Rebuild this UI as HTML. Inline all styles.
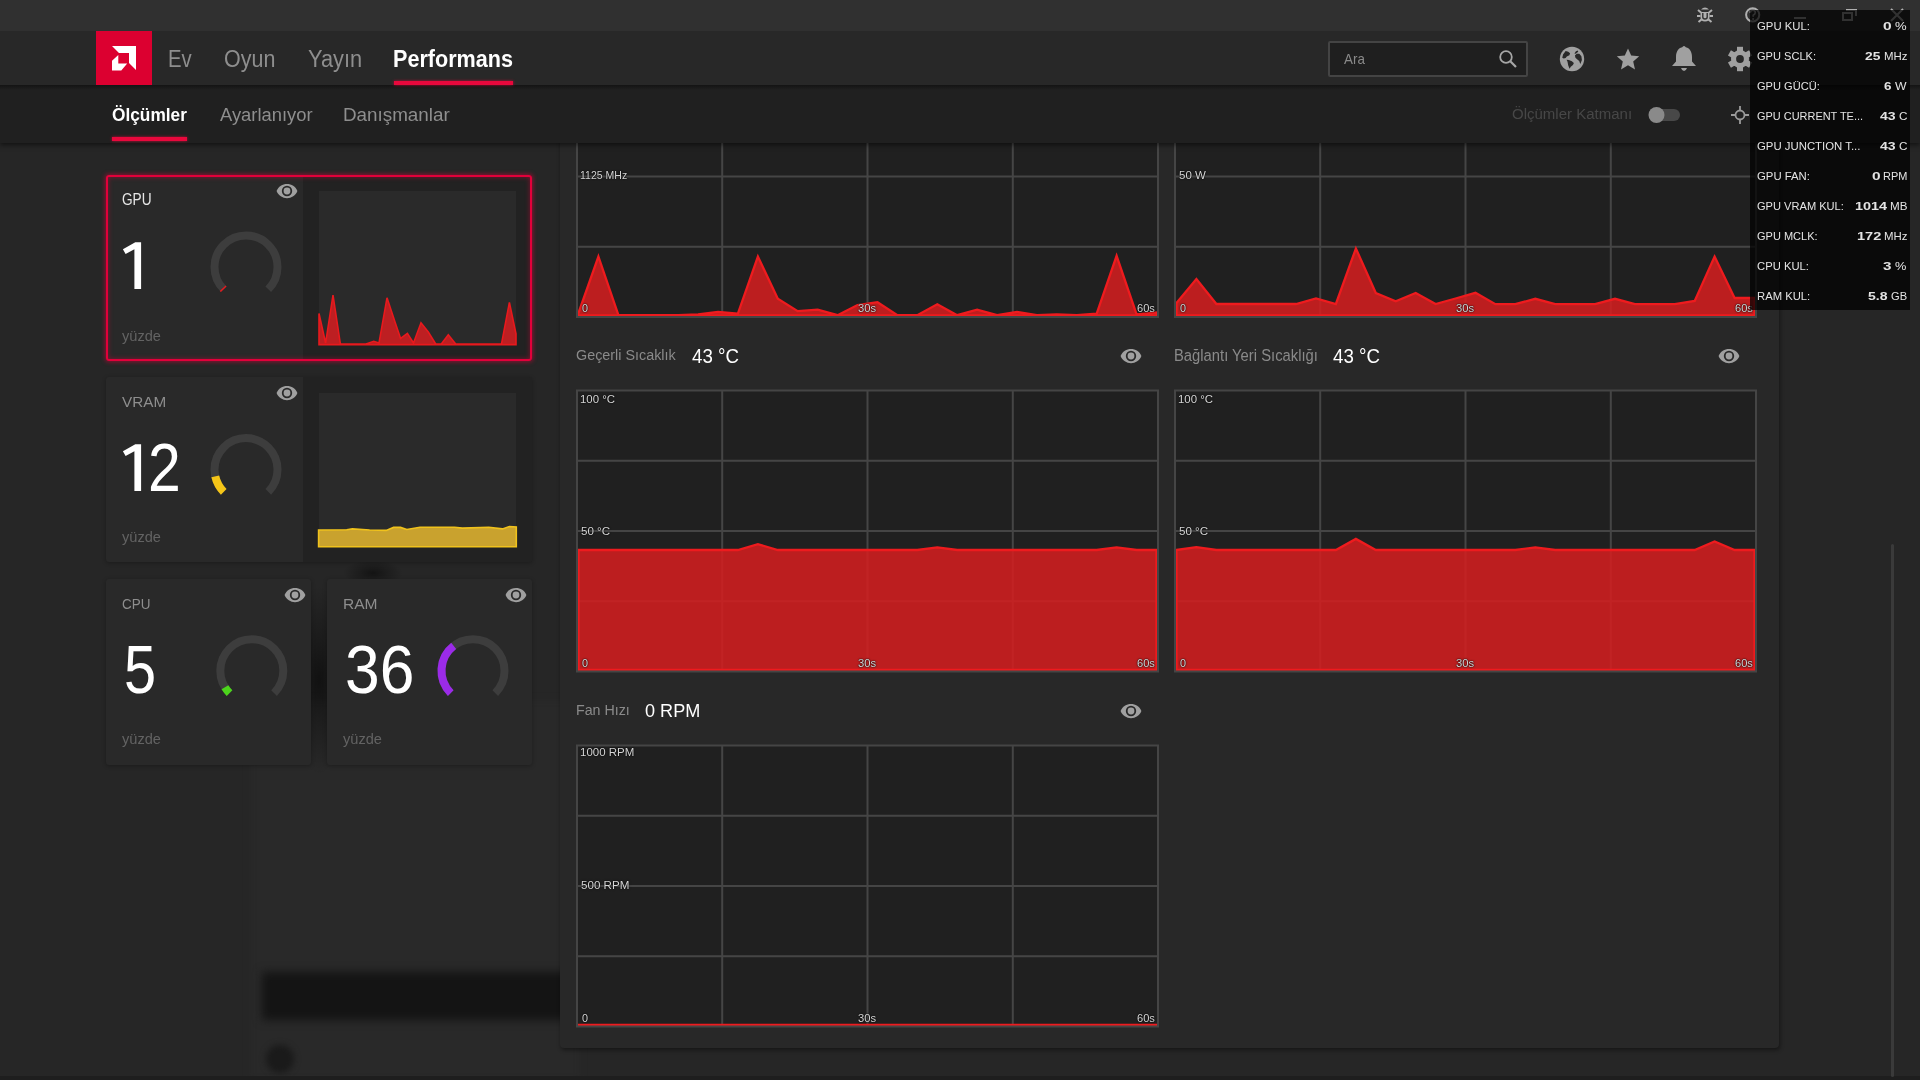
<!DOCTYPE html>
<html><head><meta charset="utf-8"><style>
*{margin:0;padding:0;box-sizing:border-box}
html,body{width:1920px;height:1080px;overflow:hidden;background:#262626;font-family:"Liberation Sans", sans-serif;}
.a{position:absolute;white-space:nowrap;line-height:1}
.t{transform-origin:0 0;z-index:6}
.ov{font-size:12px;color:#e2e2e2;z-index:21}
svg{position:absolute;left:0;top:0}
</style></head><body>

<!-- blurred background shapes -->
<div class="a" style="left:250px;top:700px;width:330px;height:380px;background:#292929;filter:blur(3px)"></div>
<div class="a" style="left:262px;top:972px;width:320px;height:48px;background:#141414;filter:blur(5px)"></div>
<div class="a" style="left:266px;top:1045px;width:28px;height:28px;border-radius:50%;background:#1a1a1a;filter:blur(3px)"></div>
<div class="a" style="left:289px;top:585px;width:60px;height:190px;background:radial-gradient(ellipse 50% 50% at 50% 50%, rgba(0,0,0,0.55) 0%, rgba(0,0,0,0.3) 40%, rgba(0,0,0,0) 100%)"></div>
<div class="a" style="left:343px;top:560px;width:60px;height:26px;background:radial-gradient(ellipse 50% 50% at 50% 50%, rgba(0,0,0,0.5) 0%, rgba(0,0,0,0.25) 45%, rgba(0,0,0,0) 100%)"></div>
<div class="a" style="left:0;top:1076px;width:1920px;height:4px;background:#1e1e1e"></div>
<!-- main panel -->
<div class="a" style="left:560px;top:120px;width:1219px;height:928px;background:#282828;border-radius:0 0 4px 4px;box-shadow:1px 2px 4px rgba(0,0,0,0.45)"></div>

<svg width="1920" height="1080" viewBox="0 0 1920 1080" style="z-index:1">
<rect x="577" y="36" width="581" height="281" fill="#202020"/>
<path d="M577,106.2 H1158 M577,176.5 H1158 M577,246.8 H1158 M722.2,36 V317 M867.5,36 V317 M1012.8,36 V317" stroke="#454545" stroke-width="2" fill="none"/>
<path d="M578.5,315.5 L578.5,313.0 L598.4,256.6 L618.4,315.2 L638.3,315.2 L658.2,315.2 L678.2,315.2 L698.1,314.4 L718.0,312.0 L737.9,313.6 L757.9,256.6 L777.8,298.8 L797.7,311.2 L817.7,309.7 L837.6,315.2 L857.5,305.0 L877.5,302.2 L897.4,315.2 L917.3,315.2 L937.3,304.2 L957.2,315.2 L977.1,309.7 L997.1,315.2 L1017.0,312.0 L1036.9,315.2 L1056.8,314.4 L1076.8,315.2 L1096.7,313.6 L1116.6,255.8 L1136.6,314.4 L1156.5,312.5 L1156.5,315.5 Z" fill="rgba(214,30,32,0.86)"/>
<path d="M578.5,313.0 L598.4,256.6 L618.4,315.2 L638.3,315.2 L658.2,315.2 L678.2,315.2 L698.1,314.4 L718.0,312.0 L737.9,313.6 L757.9,256.6 L777.8,298.8 L797.7,311.2 L817.7,309.7 L837.6,315.2 L857.5,305.0 L877.5,302.2 L897.4,315.2 L917.3,315.2 L937.3,304.2 L957.2,315.2 L977.1,309.7 L997.1,315.2 L1017.0,312.0 L1036.9,315.2 L1056.8,314.4 L1076.8,315.2 L1096.7,313.6 L1116.6,255.8 L1136.6,314.4 L1156.5,312.5 L1156.5,315.5 L578.5,315.5 Z" fill="none" stroke="#ee1b1e" stroke-width="2.3" stroke-linejoin="miter"/>
<rect x="577" y="36" width="581" height="281" fill="none" stroke="#454545" stroke-width="2"/>
<rect x="1175" y="36" width="581" height="281" fill="#202020"/>
<path d="M1175,106.2 H1756 M1175,176.5 H1756 M1175,246.8 H1756 M1320.2,36 V317 M1465.5,36 V317 M1610.8,36 V317" stroke="#454545" stroke-width="2" fill="none"/>
<path d="M1176.5,315.5 L1176.5,303.1 L1196.4,279.0 L1216.4,304.0 L1236.3,304.0 L1256.2,304.0 L1276.2,304.0 L1296.1,304.0 L1316.0,298.5 L1335.9,304.0 L1355.9,248.5 L1375.8,293.0 L1395.7,301.3 L1415.7,293.0 L1435.6,304.0 L1455.5,298.5 L1475.5,292.8 L1495.4,304.2 L1515.3,304.2 L1535.3,298.8 L1555.2,304.2 L1575.1,304.2 L1595.1,304.2 L1615.0,298.8 L1634.9,304.2 L1654.8,304.2 L1674.8,304.2 L1694.7,301.0 L1714.6,256.6 L1734.6,298.0 L1754.5,298.0 L1754.5,315.5 Z" fill="rgba(214,30,32,0.86)"/>
<path d="M1176.5,303.1 L1196.4,279.0 L1216.4,304.0 L1236.3,304.0 L1256.2,304.0 L1276.2,304.0 L1296.1,304.0 L1316.0,298.5 L1335.9,304.0 L1355.9,248.5 L1375.8,293.0 L1395.7,301.3 L1415.7,293.0 L1435.6,304.0 L1455.5,298.5 L1475.5,292.8 L1495.4,304.2 L1515.3,304.2 L1535.3,298.8 L1555.2,304.2 L1575.1,304.2 L1595.1,304.2 L1615.0,298.8 L1634.9,304.2 L1654.8,304.2 L1674.8,304.2 L1694.7,301.0 L1714.6,256.6 L1734.6,298.0 L1754.5,298.0 L1754.5,315.5 L1176.5,315.5 Z" fill="none" stroke="#ee1b1e" stroke-width="2.3" stroke-linejoin="miter"/>
<rect x="1175" y="36" width="581" height="281" fill="none" stroke="#454545" stroke-width="2"/>
<rect x="577" y="390.5" width="581" height="281" fill="#202020"/>
<path d="M577,460.8 H1158 M577,531.0 H1158 M577,601.2 H1158 M722.2,390.5 V671.5 M867.5,390.5 V671.5 M1012.8,390.5 V671.5" stroke="#454545" stroke-width="2" fill="none"/>
<path d="M578.5,670.0 L578.5,550.0 L598.4,550.0 L618.4,550.0 L638.3,550.0 L658.2,550.0 L678.2,550.0 L698.1,550.0 L718.0,550.0 L737.9,550.0 L757.9,544.2 L777.8,550.0 L797.7,550.0 L817.7,550.0 L837.6,550.0 L857.5,550.0 L877.5,550.0 L897.4,550.0 L917.3,550.0 L937.3,547.3 L957.2,550.0 L977.1,550.0 L997.1,550.0 L1017.0,550.0 L1036.9,550.0 L1056.8,550.0 L1076.8,550.0 L1096.7,550.0 L1116.6,547.3 L1136.6,550.0 L1156.5,550.0 L1156.5,670.0 Z" fill="rgba(214,30,32,0.86)"/>
<path d="M578.5,550.0 L598.4,550.0 L618.4,550.0 L638.3,550.0 L658.2,550.0 L678.2,550.0 L698.1,550.0 L718.0,550.0 L737.9,550.0 L757.9,544.2 L777.8,550.0 L797.7,550.0 L817.7,550.0 L837.6,550.0 L857.5,550.0 L877.5,550.0 L897.4,550.0 L917.3,550.0 L937.3,547.3 L957.2,550.0 L977.1,550.0 L997.1,550.0 L1017.0,550.0 L1036.9,550.0 L1056.8,550.0 L1076.8,550.0 L1096.7,550.0 L1116.6,547.3 L1136.6,550.0 L1156.5,550.0 L1156.5,670.0 L578.5,670.0 Z" fill="none" stroke="#ee1b1e" stroke-width="2.3" stroke-linejoin="miter"/>
<rect x="577" y="390.5" width="581" height="281" fill="none" stroke="#454545" stroke-width="2"/>
<rect x="1175" y="390.5" width="581" height="281" fill="#202020"/>
<path d="M1175,460.8 H1756 M1175,531.0 H1756 M1175,601.2 H1756 M1320.2,390.5 V671.5 M1465.5,390.5 V671.5 M1610.8,390.5 V671.5" stroke="#454545" stroke-width="2" fill="none"/>
<path d="M1176.5,670.0 L1176.5,550.0 L1196.4,547.1 L1216.4,550.0 L1236.3,550.0 L1256.2,550.0 L1276.2,550.0 L1296.1,550.0 L1316.0,550.0 L1335.9,550.0 L1355.9,538.9 L1375.8,550.0 L1395.7,550.0 L1415.7,550.0 L1435.6,550.0 L1455.5,550.0 L1475.5,550.0 L1495.4,550.0 L1515.3,550.0 L1535.3,547.3 L1555.2,550.0 L1575.1,550.0 L1595.1,550.0 L1615.0,550.0 L1634.9,550.0 L1654.8,550.0 L1674.8,550.0 L1694.7,550.0 L1714.6,541.4 L1734.6,550.0 L1754.5,550.0 L1754.5,670.0 Z" fill="rgba(214,30,32,0.86)"/>
<path d="M1176.5,550.0 L1196.4,547.1 L1216.4,550.0 L1236.3,550.0 L1256.2,550.0 L1276.2,550.0 L1296.1,550.0 L1316.0,550.0 L1335.9,550.0 L1355.9,538.9 L1375.8,550.0 L1395.7,550.0 L1415.7,550.0 L1435.6,550.0 L1455.5,550.0 L1475.5,550.0 L1495.4,550.0 L1515.3,550.0 L1535.3,547.3 L1555.2,550.0 L1575.1,550.0 L1595.1,550.0 L1615.0,550.0 L1634.9,550.0 L1654.8,550.0 L1674.8,550.0 L1694.7,550.0 L1714.6,541.4 L1734.6,550.0 L1754.5,550.0 L1754.5,670.0 L1176.5,670.0 Z" fill="none" stroke="#ee1b1e" stroke-width="2.3" stroke-linejoin="miter"/>
<rect x="1175" y="390.5" width="581" height="281" fill="none" stroke="#454545" stroke-width="2"/>
<rect x="577" y="745.5" width="581" height="281" fill="#202020"/>
<path d="M577,815.8 H1158 M577,886.0 H1158 M577,956.2 H1158 M722.2,745.5 V1026.5 M867.5,745.5 V1026.5 M1012.8,745.5 V1026.5" stroke="#454545" stroke-width="2" fill="none"/>
<path d="M578.5,1025.0 L578.5,1025.5 L598.4,1025.5 L618.4,1025.5 L638.3,1025.5 L658.2,1025.5 L678.2,1025.5 L698.1,1025.5 L718.0,1025.5 L737.9,1025.5 L757.9,1025.5 L777.8,1025.5 L797.7,1025.5 L817.7,1025.5 L837.6,1025.5 L857.5,1025.5 L877.5,1025.5 L897.4,1025.5 L917.3,1025.5 L937.3,1025.5 L957.2,1025.5 L977.1,1025.5 L997.1,1025.5 L1017.0,1025.5 L1036.9,1025.5 L1056.8,1025.5 L1076.8,1025.5 L1096.7,1025.5 L1116.6,1025.5 L1136.6,1025.5 L1156.5,1025.5 L1156.5,1025.0 Z" fill="rgba(214,30,32,0.86)"/>
<path d="M578.5,1025.5 L598.4,1025.5 L618.4,1025.5 L638.3,1025.5 L658.2,1025.5 L678.2,1025.5 L698.1,1025.5 L718.0,1025.5 L737.9,1025.5 L757.9,1025.5 L777.8,1025.5 L797.7,1025.5 L817.7,1025.5 L837.6,1025.5 L857.5,1025.5 L877.5,1025.5 L897.4,1025.5 L917.3,1025.5 L937.3,1025.5 L957.2,1025.5 L977.1,1025.5 L997.1,1025.5 L1017.0,1025.5 L1036.9,1025.5 L1056.8,1025.5 L1076.8,1025.5 L1096.7,1025.5 L1116.6,1025.5 L1136.6,1025.5 L1156.5,1025.5 L1156.5,1025.0 L578.5,1025.0 Z" fill="none" stroke="#ee1b1e" stroke-width="2.3" stroke-linejoin="miter"/>
<rect x="577" y="745.5" width="581" height="281" fill="none" stroke="#454545" stroke-width="2"/>
</svg>

<div class="a" style="left:0;top:85px;width:1920px;height:58px;background:#202020;z-index:2;box-shadow:0 2px 5px rgba(0,0,0,0.55)"></div>
<div class="a" style="left:0;top:31px;width:1920px;height:54px;background:#282828;z-index:3"></div>
<div class="a" style="left:0;top:0;width:1920px;height:31px;background:#303030;z-index:3"></div>
<div class="a" style="left:0;top:85px;width:1920px;height:5px;background:linear-gradient(rgba(0,0,0,0.38),rgba(0,0,0,0));z-index:5"></div>
<!-- underlines -->
<div class="a" style="z-index:5;left:394px;top:81px;width:119px;height:4px;background:#e8083c;box-shadow:0 0 3px rgba(232,8,60,0.8)"></div>
<div class="a" style="z-index:5;left:112px;top:137px;width:75px;height:4px;background:#e8083c;box-shadow:0 0 3px rgba(232,8,60,0.8)"></div>
<!-- search box -->
<div class="a" style="left:1328px;top:41px;width:200px;height:36px;background:#1f1f1f;border:2px solid #444;border-radius:2px;z-index:4"></div>

<!-- cards -->
<div class="a" style="left:106px;top:175px;width:426px;height:186px;background:#292929;border-radius:3px;z-index:1"></div>
<div class="a" style="left:303px;top:175px;width:229px;height:186px;background:#222;z-index:1"></div>
<div class="a" style="left:319px;top:191px;width:197px;height:154px;background:#2a2a2a;z-index:1"></div>
<div class="a" style="left:106px;top:175px;width:426px;height:186px;border:2px solid #e2003a;border-radius:3px;box-shadow:0 0 4px 1px rgba(226,0,58,0.55), inset 0 0 5px rgba(226,0,58,0.5);z-index:1"></div>

<div class="a" style="left:106px;top:377px;width:426px;height:185px;background:#292929;border-radius:3px;z-index:1;box-shadow:0 1px 4px rgba(0,0,0,0.3)"></div>
<div class="a" style="left:303px;top:377px;width:229px;height:185px;background:#222;border-radius:0 3px 3px 0;z-index:1"></div>
<div class="a" style="left:319px;top:393px;width:197px;height:154px;background:#2a2a2a;z-index:1"></div>

<div class="a" style="left:106px;top:579px;width:205px;height:186px;background:#292929;border-radius:3px;z-index:1;box-shadow:0 1px 4px rgba(0,0,0,0.3)"></div>
<div class="a" style="left:327px;top:579px;width:205px;height:186px;background:#292929;border-radius:3px;z-index:1;box-shadow:0 1px 4px rgba(0,0,0,0.3)"></div>

<svg width="1920" height="1080" viewBox="0 0 1920 1080" style="z-index:5">
<path d="M319.0,344.6 L319.0,313.5 L325.6,343.0 L333.0,295.0 L340.4,344.0 L366.0,344.0 L373.7,341.3 L379.0,343.0 L387.0,297.8 L395.0,321.9 L400.6,338.5 L407.4,333.3 L413.5,343.0 L421.0,322.8 L428.3,332.0 L435.7,344.0 L441.3,344.0 L448.3,334.8 L455.7,344.0 L501.5,344.0 L509.4,302.4 L516.0,333.9 L516.0,344.6 Z" fill="#bd1f22"/><path d="M319.0,313.5 L325.6,343.0 L333.0,295.0 L340.4,344.0 L366.0,344.0 L373.7,341.3 L379.0,343.0 L387.0,297.8 L395.0,321.9 L400.6,338.5 L407.4,333.3 L413.5,343.0 L421.0,322.8 L428.3,332.0 L435.7,344.0 L441.3,344.0 L448.3,334.8 L455.7,344.0 L501.5,344.0 L509.4,302.4 L516.0,333.9 L516,344.6 L319,344.6 Z" fill="none" stroke="#e8191d" stroke-width="1.6"/>
<path d="M318.6,546.7 L318.6,530.0 L346.7,529.7 L352.4,528.9 L369.6,530.0 L386.2,530.4 L393.6,527.4 L400.5,527.4 L406.8,529.5 L420.0,527.2 L454.4,527.2 L462.4,528.1 L488.8,527.2 L502.5,528.9 L509.4,526.6 L516.3,527.0 L516.3,546.7 Z" fill="#c9a22e"/><path d="M318.6,530.0 L346.7,529.7 L352.4,528.9 L369.6,530.0 L386.2,530.4 L393.6,527.4 L400.5,527.4 L406.8,529.5 L420.0,527.2 L454.4,527.2 L462.4,528.1 L488.8,527.2 L502.5,528.9 L509.4,526.6 L516.3,527.0 L516.3,546.7 L318.6,546.7 Z" fill="none" stroke="#f0c21c" stroke-width="1.6"/>
<path d="M223.73,289.27 A31.5,31.5 0 1 1 268.27,289.27" stroke="#3d3d3d" stroke-width="8" fill="none"/><path d="M223.73,289.27 A31.5,31.5 0 0 1 222.70,288.20" stroke="#e8191d" stroke-width="8" fill="none"/>
<path d="M223.73,491.87 A31.5,31.5 0 1 1 268.27,491.87" stroke="#3d3d3d" stroke-width="8" fill="none"/><path d="M223.73,491.87 A31.5,31.5 0 0 1 215.26,476.47" stroke="#f5c518" stroke-width="8" fill="none"/>
<path d="M229.53,693.07 A31.5,31.5 0 1 1 274.07,693.07" stroke="#3d3d3d" stroke-width="8" fill="none"/><path d="M229.53,693.07 A31.5,31.5 0 0 1 224.94,687.26" stroke="#4cd41c" stroke-width="8" fill="none"/>
<path d="M450.73,693.07 A31.5,31.5 0 1 1 495.27,693.07" stroke="#3d3d3d" stroke-width="8" fill="none"/><path d="M450.73,693.07 A31.5,31.5 0 0 1 453.69,645.91" stroke="#9b2be8" stroke-width="8" fill="none"/>
<path d="M276.6,191 C280,181.5 294,181.5 297.4,191 C294,200.5 280,200.5 276.6,191 Z" fill="#a0a0a0"/><circle cx="287" cy="191" r="5.2" fill="#292929"/><circle cx="287" cy="191" r="3.4" fill="#a0a0a0"/>
<path d="M276.6,393 C280,383.5 294,383.5 297.4,393 C294,402.5 280,402.5 276.6,393 Z" fill="#a0a0a0"/><circle cx="287" cy="393" r="5.2" fill="#292929"/><circle cx="287" cy="393" r="3.4" fill="#a0a0a0"/>
<path d="M284.6,595 C288,585.5 302,585.5 305.4,595 C302,604.5 288,604.5 284.6,595 Z" fill="#a0a0a0"/><circle cx="295" cy="595" r="5.2" fill="#292929"/><circle cx="295" cy="595" r="3.4" fill="#a0a0a0"/>
<path d="M505.6,595 C509,585.5 523,585.5 526.4,595 C523,604.5 509,604.5 505.6,595 Z" fill="#a0a0a0"/><circle cx="516" cy="595" r="5.2" fill="#292929"/><circle cx="516" cy="595" r="3.4" fill="#a0a0a0"/>
<path d="M1120.6,356 C1124,346.5 1138,346.5 1141.4,356 C1138,365.5 1124,365.5 1120.6,356 Z" fill="#a0a0a0"/><circle cx="1131" cy="356" r="5.2" fill="#282828"/><circle cx="1131" cy="356" r="3.4" fill="#a0a0a0"/>
<path d="M1718.6,356 C1722,346.5 1736,346.5 1739.4,356 C1736,365.5 1722,365.5 1718.6,356 Z" fill="#a0a0a0"/><circle cx="1729" cy="356" r="5.2" fill="#282828"/><circle cx="1729" cy="356" r="3.4" fill="#a0a0a0"/>
<path d="M1120.6,711 C1124,701.5 1138,701.5 1141.4,711 C1138,720.5 1124,720.5 1120.6,711 Z" fill="#a0a0a0"/><circle cx="1131" cy="711" r="5.2" fill="#282828"/><circle cx="1131" cy="711" r="3.4" fill="#a0a0a0"/>
<path d="M134.4,288.9 H141.1 V242.2 H135.3 L122.9,249.3 L125.6,254 L134.4,249.3 Z" fill="#fff"/>
<path d="M134.4,490.9 H141.1 V444.2 H135.3 L122.9,451.3 L125.6,456 L134.4,451.3 Z" fill="#fff"/>
<!-- AMD logo -->
<rect x="96" y="31" width="56" height="54" fill="#dc0030"/>
<path d="M112,46 H136 V70 L129,63 V53 H119 Z" fill="#fff"/>
<path d="M118.3,54.9 V63.4 H127.2 L121.3,70.4 H112 V60.8 Z" fill="#fff"/>
<!-- search icon -->
<circle cx="1506" cy="57" r="5.8" fill="none" stroke="#a6a6a6" stroke-width="1.8"/>
<path d="M1510.3,61.3 L1516,67" stroke="#a6a6a6" stroke-width="2.2"/>
<!-- globe -->
<circle cx="1572" cy="59" r="12.2" fill="#a0a0a0"/>
<g transform="translate(1571.9,59) scale(0.05208) translate(-420,-365)" fill="#282828">
<path d="M235,340 L250,280 L300,212 L350,228 L385,255 L372,292 L322,318 L300,345 L262,356 Z"/>
<path d="M318,378 L362,384 L420,410 L458,440 L440,482 L398,512 L375,552 L350,492 L336,420 Z"/>
<path d="M468,258 L498,214 L532,204 L542,226 L492,266 Z"/>
<path d="M478,300 L512,262 L562,262 L602,310 L612,382 L582,462 L560,402 L520,372 L488,342 Z"/>
</g>
<!-- star -->
<path d="M1628,48.6 L1631.2,55.6 L1639.2,56.3 L1633.2,61.5 L1635,69.6 L1628,65.3 L1621,69.6 L1622.8,61.5 L1616.8,56.3 L1624.8,55.6 Z" fill="#a0a0a0"/>
<!-- bell -->
<path d="M1684,47 C1689,47 1692,51 1692,57 V61.5 L1696,66 H1672 L1676,61.5 V57 C1676,51 1679,47 1684,47 Z" fill="#a0a0a0"/>
<path d="M1681,68 H1687 Q1686,71 1684,71 Q1682,71 1681,68 Z" fill="#a0a0a0"/><circle cx="1684" cy="47.6" r="1.6" fill="#a0a0a0"/>
<!-- gear -->
<g transform="translate(1740,59)" fill="#a0a0a0">
<circle r="9"/>
<rect x="-3" y="-12.2" width="6" height="24.4"/>
<rect x="-3" y="-12.2" width="6" height="24.4" transform="rotate(60)"/>
<rect x="-3" y="-12.2" width="6" height="24.4" transform="rotate(120)"/>
<circle r="3.9" fill="#282828"/>
</g>
<!-- toggle -->
<rect x="1649" y="109" width="31" height="12" rx="6" fill="#484848"/>
<circle cx="1656.5" cy="115" r="8" fill="#8a8a8a"/>
<!-- crosshair -->
<g stroke="#9a9a9a" stroke-width="1.8" fill="none">
<circle cx="1740" cy="115" r="4.5"/>
<path d="M1731,115 H1735.5 M1744.5,115 H1749 M1740,106 V110.5 M1740,119.5 V124"/>
</g>
<!-- title icons -->
<g fill="none" stroke="#b0b0b0" stroke-width="2">
<circle cx="1752.7" cy="14.8" r="6.6"/>
</g>
<path d="M1750.3,12.8 Q1750.3,10.3 1752.8,10.3 Q1755.3,10.3 1755.3,12.6 Q1755.3,14.2 1753.2,15.2 V16.8" stroke="#b0b0b0" stroke-width="1.6" fill="none"/>
<circle cx="1753.1" cy="18.9" r="1" fill="#b0b0b0"/>
<g fill="#b0b0b0">
<path d="M1701,9.5 Q1705,5.5 1709,9.5 Z"/>
<path d="M1700.5,12 H1709.5 V17 Q1709.5,21.5 1705,21.5 Q1700.5,21.5 1700.5,17 Z"/>
</g>
<path d="M1702.8,13 V17 Q1702.8,19 1705,19 Q1707.2,19 1707.2,17 V13" stroke="#303030" stroke-width="1.4" fill="none"/>
<g stroke="#b0b0b0" stroke-width="2">
<path d="M1697,16 H1700.5 M1709.5,16 H1713 M1698,10 L1701,12.5 M1712,10 L1709,12.5 M1698.5,22 L1701.5,19.5 M1711.5,22 L1708.5,19.5"/>
</g>
<g stroke="#b0b0b0" stroke-width="2" fill="none">
<path d="M1794,18 H1806"/>
<rect x="1843" y="13" width="9" height="7"/>
<path d="M1846,10 H1856 V16"/>
<path d="M1891,9 L1903,21 M1903,9 L1891,21"/>
</g>
</svg>

<div class="a t" style="left:167.97px;top:47.642px;font-size:23.48px;color:#8e8e8e;font-weight:normal;transform:scaleX(0.8659);">Ev</div>
<div class="a t" style="left:224.44px;top:47.642px;font-size:23.48px;color:#8e8e8e;font-weight:normal;transform:scaleX(0.9153);">Oyun</div>
<div class="a t" style="left:307.76px;top:47.642px;font-size:23.48px;color:#8e8e8e;font-weight:normal;transform:scaleX(0.9290);">Yayın</div>
<div class="a t" style="left:393.20px;top:47.742px;font-size:23.48px;color:#ffffff;font-weight:bold;transform:scaleX(0.9202);">Performans</div>
<div class="a t" style="left:111.81px;top:106.672px;font-size:17.68px;color:#ffffff;font-weight:bold;transform:scaleX(0.9779);">Ölçümler</div>
<div class="a t" style="left:219.80px;top:106.672px;font-size:17.68px;color:#8e8e8e;font-weight:normal;transform:scaleX(1.0397);">Ayarlanıyor</div>
<div class="a t" style="left:343.49px;top:106.672px;font-size:17.68px;color:#8e8e8e;font-weight:normal;transform:scaleX(1.0651);">Danışmanlar</div>
<div class="a t" style="left:1344.00px;top:51.537px;font-size:14.78px;color:#8a8a8a;font-weight:normal;transform:scaleX(0.9065);">Ara</div>
<div class="a t" style="left:1512.10px;top:105.604px;font-size:15.29px;color:#474747;font-weight:normal;transform:scaleX(0.9817);">Ölçümler Katmanı</div>
<div class="a t" style="left:122.02px;top:191.701px;font-size:15.94px;color:#e6e6e6;font-weight:normal;transform:scaleX(0.8560);">GPU</div>
<div class="a t" style="left:121.90px;top:328.688px;font-size:14.72px;color:#636363;font-weight:normal;transform:scaleX(0.9910);">yüzde</div>
<div class="a t" style="left:122.40px;top:394.560px;font-size:14.93px;color:#8e8e8e;font-weight:normal;transform:scaleX(1.0227);">VRAM</div>
<div class="a t" style="left:147.55px;top:432.598px;font-size:68.12px;color:#ffffff;font-weight:normal;transform:scaleX(0.8648);">2</div>
<div class="a t" style="left:121.90px;top:529.688px;font-size:14.72px;color:#636363;font-weight:normal;transform:scaleX(0.9910);">yüzde</div>
<div class="a t" style="left:122.03px;top:595.690px;font-size:15.07px;color:#8e8e8e;font-weight:normal;transform:scaleX(0.8940);">CPU</div>
<div class="a t" style="left:123.79px;top:634.598px;font-size:68.12px;color:#ffffff;font-weight:normal;transform:scaleX(0.8472);">5</div>
<div class="a t" style="left:121.90px;top:731.688px;font-size:14.72px;color:#636363;font-weight:normal;transform:scaleX(0.9910);">yüzde</div>
<div class="a t" style="left:342.66px;top:595.694px;font-size:15.36px;color:#8e8e8e;font-weight:normal;transform:scaleX(1.0131);">RAM</div>
<div class="a t" style="left:344.63px;top:634.598px;font-size:68.12px;color:#ffffff;font-weight:normal;transform:scaleX(0.9149);">36</div>
<div class="a t" style="left:343.10px;top:731.688px;font-size:14.72px;color:#636363;font-weight:normal;transform:scaleX(0.9910);">yüzde</div>
<div class="a t" style="left:576.03px;top:347.710px;font-size:14.93px;color:#8a8a8a;font-weight:normal;transform:scaleX(0.9616);">Geçerli Sıcaklık</div>
<div class="a t" style="left:691.93px;top:346.739px;font-size:19.66px;color:#ffffff;font-weight:normal;transform:scaleX(0.9511);">43 °C</div>
<div class="a t" style="left:1173.72px;top:347.680px;font-size:16.67px;color:#8a8a8a;font-weight:normal;transform:scaleX(0.8880);">Bağlantı Yeri Sıcaklığı</div>
<div class="a t" style="left:1332.93px;top:346.739px;font-size:19.66px;color:#ffffff;font-weight:normal;transform:scaleX(0.9511);">43 °C</div>
<div class="a t" style="left:575.86px;top:701.544px;font-size:15.36px;color:#8a8a8a;font-weight:normal;transform:scaleX(0.9267);">Fan Hızı</div>
<div class="a t" style="left:645.46px;top:700.690px;font-size:19.13px;color:#ffffff;font-weight:normal;transform:scaleX(0.9470);">0 RPM</div>
<div class="a t" style="left:580.46px;top:169.574px;font-size:11.09px;color:#d6d6d6;font-weight:normal;transform:scaleX(0.9495);text-shadow:0 0 2px #000,0 0 1px #000">1125 MHz</div>
<div class="a t" style="left:581.68px;top:302.667px;font-size:11.45px;color:#d6d6d6;font-weight:normal;transform:scaleX(0.9447);text-shadow:0 0 2px #000,0 0 1px #000">0</div>
<div class="a t" style="left:858.46px;top:302.667px;font-size:11.45px;color:#d6d6d6;font-weight:normal;transform:scaleX(0.9790);text-shadow:0 0 2px #000,0 0 1px #000">30s</div>
<div class="a t" style="left:1136.55px;top:302.667px;font-size:11.45px;color:#d6d6d6;font-weight:normal;transform:scaleX(0.9689);text-shadow:0 0 2px #000,0 0 1px #000">60s</div>
<div class="a t" style="left:1178.74px;top:169.574px;font-size:11.09px;color:#d6d6d6;font-weight:normal;transform:scaleX(1.0349);text-shadow:0 0 2px #000,0 0 1px #000">50 W</div>
<div class="a t" style="left:1179.68px;top:302.667px;font-size:11.45px;color:#d6d6d6;font-weight:normal;transform:scaleX(0.9447);text-shadow:0 0 2px #000,0 0 1px #000">0</div>
<div class="a t" style="left:1456.46px;top:302.667px;font-size:11.45px;color:#d6d6d6;font-weight:normal;transform:scaleX(0.9790);text-shadow:0 0 2px #000,0 0 1px #000">30s</div>
<div class="a t" style="left:1734.55px;top:302.667px;font-size:11.45px;color:#d6d6d6;font-weight:normal;transform:scaleX(0.9689);text-shadow:0 0 2px #000,0 0 1px #000">60s</div>
<div class="a t" style="left:580.40px;top:393.667px;font-size:11.45px;color:#d6d6d6;font-weight:normal;transform:scaleX(0.9981);text-shadow:0 0 2px #000,0 0 1px #000">100 °C</div>
<div class="a t" style="left:581.04px;top:524.738px;font-size:11.72px;color:#d6d6d6;font-weight:normal;transform:scaleX(0.9896);text-shadow:0 0 2px #000,0 0 1px #000">50 °C</div>
<div class="a t" style="left:581.68px;top:657.695px;font-size:11.30px;color:#d6d6d6;font-weight:normal;transform:scaleX(0.9572);text-shadow:0 0 2px #000,0 0 1px #000">0</div>
<div class="a t" style="left:858.46px;top:657.695px;font-size:11.30px;color:#d6d6d6;font-weight:normal;transform:scaleX(0.9920);text-shadow:0 0 2px #000,0 0 1px #000">30s</div>
<div class="a t" style="left:1136.55px;top:657.695px;font-size:11.30px;color:#d6d6d6;font-weight:normal;transform:scaleX(0.9818);text-shadow:0 0 2px #000,0 0 1px #000">60s</div>
<div class="a t" style="left:1178.40px;top:393.667px;font-size:11.45px;color:#d6d6d6;font-weight:normal;transform:scaleX(0.9981);text-shadow:0 0 2px #000,0 0 1px #000">100 °C</div>
<div class="a t" style="left:1179.04px;top:524.738px;font-size:11.72px;color:#d6d6d6;font-weight:normal;transform:scaleX(0.9896);text-shadow:0 0 2px #000,0 0 1px #000">50 °C</div>
<div class="a t" style="left:1179.68px;top:657.695px;font-size:11.30px;color:#d6d6d6;font-weight:normal;transform:scaleX(0.9572);text-shadow:0 0 2px #000,0 0 1px #000">0</div>
<div class="a t" style="left:1456.46px;top:657.695px;font-size:11.30px;color:#d6d6d6;font-weight:normal;transform:scaleX(0.9920);text-shadow:0 0 2px #000,0 0 1px #000">30s</div>
<div class="a t" style="left:1734.55px;top:657.695px;font-size:11.30px;color:#d6d6d6;font-weight:normal;transform:scaleX(0.9818);text-shadow:0 0 2px #000,0 0 1px #000">60s</div>
<div class="a t" style="left:580.39px;top:746.514px;font-size:11.16px;color:#d6d6d6;font-weight:normal;transform:scaleX(1.0307);text-shadow:0 0 2px #000,0 0 1px #000">1000 RPM</div>
<div class="a t" style="left:581.04px;top:880.734px;font-size:10.43px;color:#d6d6d6;font-weight:normal;transform:scaleX(1.1135);text-shadow:0 0 2px #000,0 0 1px #000">500 RPM</div>
<div class="a t" style="left:581.68px;top:1012.648px;font-size:11.59px;color:#d6d6d6;font-weight:normal;transform:scaleX(0.9332);text-shadow:0 0 2px #000,0 0 1px #000">0</div>
<div class="a t" style="left:858.46px;top:1012.648px;font-size:11.59px;color:#d6d6d6;font-weight:normal;transform:scaleX(0.9671);text-shadow:0 0 2px #000,0 0 1px #000">30s</div>
<div class="a t" style="left:1136.55px;top:1012.648px;font-size:11.59px;color:#d6d6d6;font-weight:normal;transform:scaleX(0.9572);text-shadow:0 0 2px #000,0 0 1px #000">60s</div>
<div class="a t" style="left:1757.33px;top:19.728px;font-size:11.79px;color:#e4e4e4;font-weight:normal;transform:scaleX(0.9624);z-index:21">GPU KUL:</div>
<div class="a t" style="left:1882.73px;top:19.728px;font-size:11.79px;color:#e4e4e4;font-weight:bold;transform:scaleX(1.3155);z-index:21">0</div>
<div class="a t" style="left:1895.01px;top:19.728px;font-size:11.79px;color:#e4e4e4;font-weight:normal;transform:scaleX(1.1088);z-index:21">%</div>
<div class="a t" style="left:1757.35px;top:49.728px;font-size:11.79px;color:#e4e4e4;font-weight:normal;transform:scaleX(0.9384);z-index:21">GPU SCLK:</div>
<div class="a t" style="left:1864.99px;top:49.728px;font-size:11.79px;color:#e4e4e4;font-weight:bold;transform:scaleX(1.1725);z-index:21">25</div>
<div class="a t" style="left:1884.49px;top:49.728px;font-size:11.79px;color:#e4e4e4;font-weight:normal;transform:scaleX(0.9686);z-index:21">MHz</div>
<div class="a t" style="left:1757.35px;top:79.728px;font-size:11.79px;color:#e4e4e4;font-weight:normal;transform:scaleX(0.9403);z-index:21">GPU GÜCÜ:</div>
<div class="a t" style="left:1883.80px;top:79.728px;font-size:11.79px;color:#e4e4e4;font-weight:bold;transform:scaleX(1.1424);z-index:21">6</div>
<div class="a t" style="left:1895.40px;top:79.728px;font-size:11.79px;color:#e4e4e4;font-weight:normal;transform:scaleX(1.0357);z-index:21">W</div>
<div class="a t" style="left:1757.35px;top:109.728px;font-size:11.79px;color:#e4e4e4;font-weight:normal;transform:scaleX(0.9292);z-index:21">GPU CURRENT TE...</div>
<div class="a t" style="left:1879.86px;top:109.728px;font-size:11.79px;color:#e4e4e4;font-weight:bold;transform:scaleX(1.1933);z-index:21">43</div>
<div class="a t" style="left:1899.41px;top:109.728px;font-size:11.79px;color:#e4e4e4;font-weight:normal;transform:scaleX(0.9940);z-index:21">C</div>
<div class="a t" style="left:1757.33px;top:139.728px;font-size:11.79px;color:#e4e4e4;font-weight:normal;transform:scaleX(0.9651);z-index:21">GPU JUNCTION T...</div>
<div class="a t" style="left:1879.86px;top:139.728px;font-size:11.79px;color:#e4e4e4;font-weight:bold;transform:scaleX(1.1933);z-index:21">43</div>
<div class="a t" style="left:1899.41px;top:139.728px;font-size:11.79px;color:#e4e4e4;font-weight:normal;transform:scaleX(0.9940);z-index:21">C</div>
<div class="a t" style="left:1757.33px;top:169.728px;font-size:11.79px;color:#e4e4e4;font-weight:normal;transform:scaleX(0.9625);z-index:21">GPU FAN:</div>
<div class="a t" style="left:1871.53px;top:169.728px;font-size:11.79px;color:#e4e4e4;font-weight:bold;transform:scaleX(1.3155);z-index:21">0</div>
<div class="a t" style="left:1883.42px;top:169.728px;font-size:11.79px;color:#e4e4e4;font-weight:normal;transform:scaleX(0.9305);z-index:21">RPM</div>
<div class="a t" style="left:1757.35px;top:199.728px;font-size:11.79px;color:#e4e4e4;font-weight:normal;transform:scaleX(0.9411);z-index:21">GPU VRAM KUL:</div>
<div class="a t" style="left:1854.53px;top:199.728px;font-size:11.79px;color:#e4e4e4;font-weight:bold;transform:scaleX(1.2243);z-index:21">1014</div>
<div class="a t" style="left:1890.07px;top:199.728px;font-size:11.79px;color:#e4e4e4;font-weight:normal;transform:scaleX(0.9884);z-index:21">MB</div>
<div class="a t" style="left:1757.35px;top:229.728px;font-size:11.79px;color:#e4e4e4;font-weight:normal;transform:scaleX(0.9347);z-index:21">GPU MCLK:</div>
<div class="a t" style="left:1856.63px;top:229.728px;font-size:11.79px;color:#e4e4e4;font-weight:bold;transform:scaleX(1.2353);z-index:21">172</div>
<div class="a t" style="left:1884.49px;top:229.728px;font-size:11.79px;color:#e4e4e4;font-weight:normal;transform:scaleX(0.9686);z-index:21">MHz</div>
<div class="a t" style="left:1757.34px;top:259.728px;font-size:11.79px;color:#e4e4e4;font-weight:normal;transform:scaleX(0.9554);z-index:21">CPU KUL:</div>
<div class="a t" style="left:1882.60px;top:259.728px;font-size:11.79px;color:#e4e4e4;font-weight:bold;transform:scaleX(1.2892);z-index:21">3</div>
<div class="a t" style="left:1895.02px;top:259.728px;font-size:11.79px;color:#e4e4e4;font-weight:normal;transform:scaleX(1.0832);z-index:21">%</div>
<div class="a t" style="left:1757.00px;top:289.728px;font-size:11.79px;color:#e4e4e4;font-weight:normal;transform:scaleX(0.9570);z-index:21">RAM KUL:</div>
<div class="a t" style="left:1867.88px;top:289.728px;font-size:11.79px;color:#e4e4e4;font-weight:bold;transform:scaleX(1.1890);z-index:21">5.8</div>
<div class="a t" style="left:1891.44px;top:289.728px;font-size:11.79px;color:#e4e4e4;font-weight:normal;transform:scaleX(0.9439);z-index:21">GB</div>

<!-- overlay -->
<div class="a" style="left:1750px;top:10px;width:160px;height:300px;background:rgba(0,0,0,0.72);z-index:20"></div>


<!-- scrollbar -->
<div class="a" style="left:1891px;top:544px;width:3px;height:533px;background:#3a3a3a;border-radius:2px"></div>
</body></html>
